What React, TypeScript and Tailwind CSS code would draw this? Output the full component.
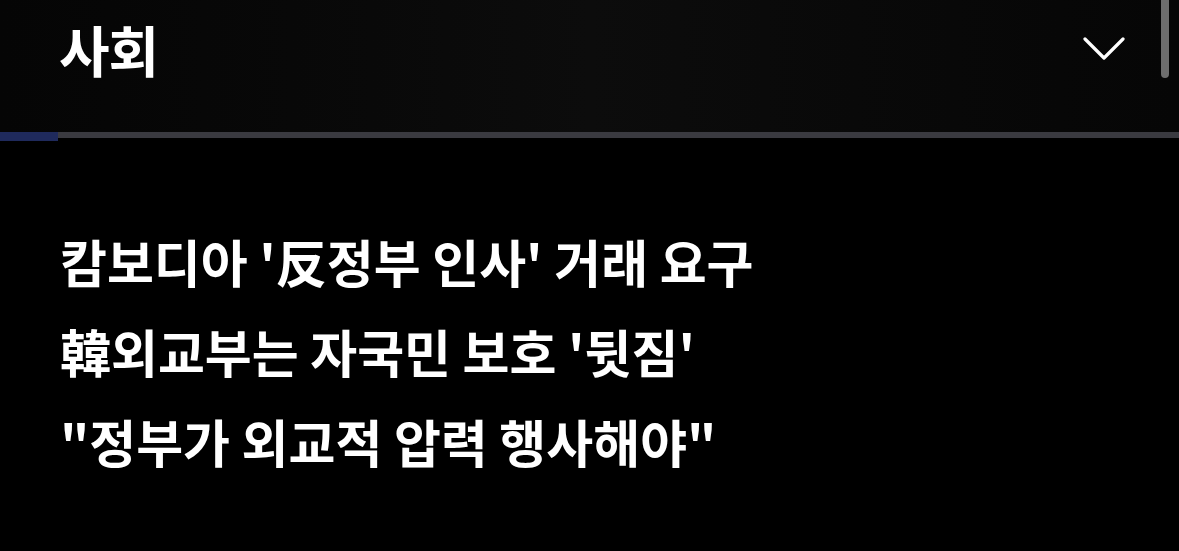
const headlines = [
  "캄보디아 '反정부 인사' 거래 요구",
  "韓외교부는 자국민 보호 '뒷짐'",
  '"정부가 외교적 압력 행사해야"',
];

const font = { fontFamily: '"Noto Sans CJK KR", "Noto Sans", sans-serif' };

export default function App() {
  return (
    <div className="relative h-[551px] w-[1179px] overflow-hidden bg-black text-white" style={font}>
      <header className="flex h-[132px] items-start justify-between bg-gradient-to-r from-[#050505] via-[#0c0c0c] to-[#060606] pl-[59px] pr-[54px]">
        <h2 className="mt-[12px] text-[55px] font-bold leading-[72px] tracking-[-1px]">사회</h2>
        <svg className="mt-[37px]" width="42" height="25" viewBox="0 0 42 25" fill="none">
          <path d="M2 2 L21 21 L40 2" stroke="white" strokeWidth="3.2" strokeLinecap="round" strokeLinejoin="round" />
        </svg>
      </header>
      <div className="relative h-[6px] bg-[#3a3a40]">
        <div className="absolute left-0 top-0 h-[9px] w-[58px] bg-[#1f2a5c]" />
      </div>
      <ul className="flex flex-col pl-[60px] pt-[78px]">
        {headlines.map((line) => (
          <li key={line} className="text-[51px] font-bold leading-[90px]">
            {line}
          </li>
        ))}
      </ul>
      <div className="absolute right-[10px] top-0 h-[78px] w-[8px] rounded-b-full bg-[#6e6e6e]" />
    </div>
  );
}
